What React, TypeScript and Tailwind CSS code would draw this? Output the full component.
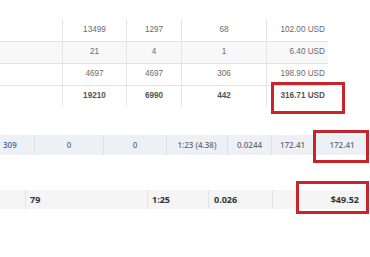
import React from 'react';

const usageRows = [
  { a: '13499', b: '1297', c: '68', cost: '102.00 USD' },
  { a: '21', b: '4', c: '1', cost: '6.40 USD' },
  { a: '4697', b: '4697', c: '306', cost: '198.90 USD' },
];

const RedBox = ({ className }: { className: string }) => (
  <div className={`absolute border-[3px] border-[#c8242c] pointer-events-none ${className}`} />
);

const App = () => {
  return (
    <div className="relative w-[370px] h-[257px] bg-white overflow-hidden">
      {/* usage table */}
      <div
        className="pt-[19px] w-[328px] text-[8.2px] text-[#6a6a6a]"
        style={{ fontFamily: '"Liberation Sans", Arial, sans-serif' }}
      >
        {usageRows.map((r, i) => (
          <div
            key={i}
            className={`flex h-[22px] items-center ${i > 0 ? 'border-t border-[#e3e3e3]' : ''} ${i === 1 ? 'bg-[#f8f8f8]' : ''}`}
          >
            <div className="w-[62px] h-full" />
            <div className="w-[64px] h-full flex items-center justify-center border-l border-[#e6e6e6]">{r.a}</div>
            <div className="w-[55px] h-full flex items-center justify-center border-l border-[#e6e6e6]">{r.b}</div>
            <div className="w-[85px] h-full flex items-center justify-center border-l border-[#e6e6e6]">{r.c}</div>
            <div className="flex-1 h-full flex items-center justify-end pr-[3px] border-l border-[#e6e6e6]">{r.cost}</div>
          </div>
        ))}
        <div className="flex h-[22px] items-center border-t border-[#e3e3e3] font-bold text-[#555]">
          <div className="w-[62px] h-full" />
          <div className="w-[64px] h-full flex items-center justify-center border-l border-[#e6e6e6]">19210</div>
          <div className="w-[55px] h-full flex items-center justify-center border-l border-[#e6e6e6]">6990</div>
          <div className="w-[85px] h-full flex items-center justify-center border-l border-[#e6e6e6]">442</div>
          <div className="flex-1 h-full flex items-center justify-end pr-[3px] border-l border-[#e6e6e6]">316.71 USD</div>
        </div>
      </div>

      {/* campaign row */}
      <div
        className="mt-[28px] flex h-[20px] bg-[#edf1f6] text-[8px] font-semibold text-[#6b6f75]"
        style={{ fontFamily: '"Open Sans", sans-serif' }}
      >
        <div className="w-[34px] flex items-center pl-[3px] text-[#3a6ea5]">309</div>
        <div className="w-[69px] flex items-center justify-center border-l border-[#dbe1e8]">0</div>
        <div className="w-[63px] flex items-center justify-center border-l border-[#dbe1e8]">0</div>
        <div className="w-[61px] flex items-center justify-center border-l border-[#dbe1e8]">1:23 (4.38)</div>
        <div className="w-[44px] flex items-center justify-center border-l border-[#dbe1e8]">0.0244</div>
        <div className="w-[42px] flex items-center justify-center border-l border-[#dbe1e8]">172.41</div>
        <div className="flex-1 flex items-center justify-center border-l border-[#dbe1e8]">172.41</div>
      </div>

      {/* summary row */}
      <div
        className="mt-[35px] flex h-[19px] w-[367px] bg-[#f5f5f5] text-[9px] font-bold text-[#333]"
        style={{ fontFamily: '"Open Sans", sans-serif' }}
      >
        <div className="w-[25px]" />
        <div className="w-[122px] flex items-center pl-[4px] border-l border-[#e4e4e4]">79</div>
        <div className="w-[61px] flex items-center pl-[4px] border-l border-[#e4e4e4]">1:25</div>
        <div className="w-[64px] flex items-center pl-[5px] border-l border-[#e4e4e4]">0.026</div>
        <div className="flex-1 flex items-center justify-end pr-[8px] border-l border-[#e4e4e4]">$49.52</div>
      </div>

      {/* highlight annotations */}
      <RedBox className="left-[271px] top-[82px] w-[74px] h-[32px]" />
      <RedBox className="left-[313px] top-[130px] w-[56px] h-[33px]" />
      <RedBox className="left-[296px] top-[181px] w-[73px] h-[33px]" />
    </div>
  );
};

export default App;
